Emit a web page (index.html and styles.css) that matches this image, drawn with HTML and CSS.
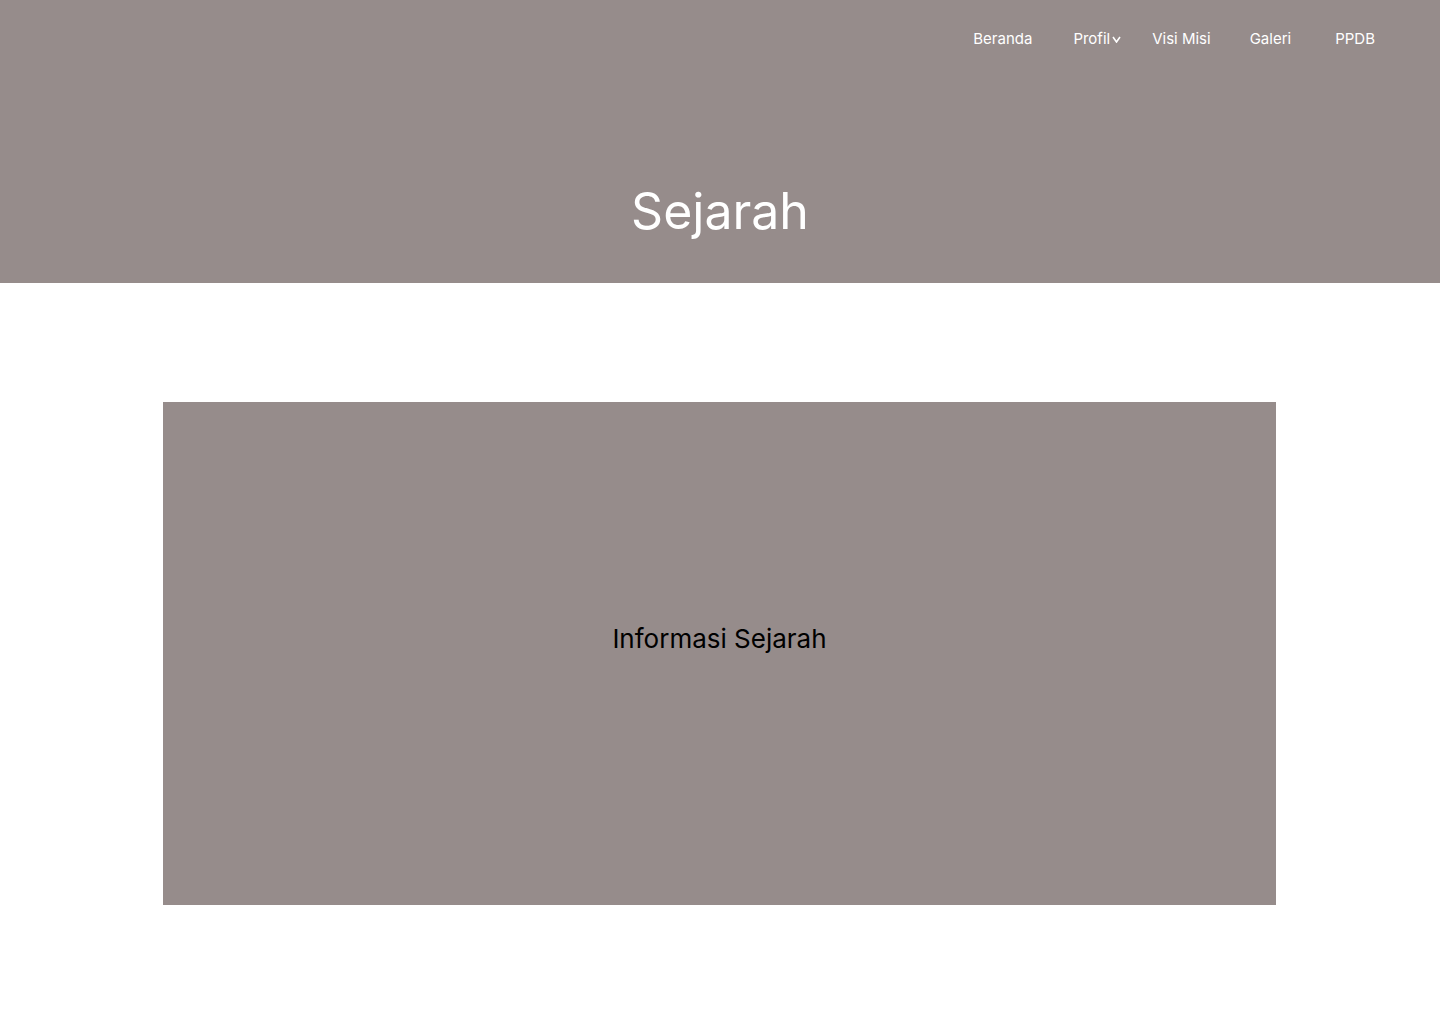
FILE: index.html
```html
<!DOCTYPE html>
<html lang="id">
<head>
<meta charset="utf-8">
<title>Sejarah</title>
<link rel="stylesheet" href="styles.css">
</head>
<body>
<header class="hero">
  <nav class="nav">
    <a class="nav-item" href="#">Beranda</a>
    <a class="nav-item nav-drop" href="#">Profil<svg class="chev" width="9" height="7" viewBox="0 0 9 7"><polyline points="1,1 4.5,6 8,1" fill="none" stroke="#fff" stroke-width="1.6"/></svg></a>
    <a class="nav-item nav-visi" href="#">Visi Misi</a>
    <a class="nav-item nav-galeri" href="#">Galeri</a>
    <a class="nav-item nav-ppdb" href="#">PPDB</a>
  </nav>
  <h1 class="hero-title">Sejarah</h1>
</header>
<main class="content">
  <section class="info-box">
    <p class="info-text">Informasi Sejarah</p>
  </section>
</main>
</body>
</html>
```

FILE: styles.css
```css
* { box-sizing: border-box; }
html, body { margin: 0; padding: 0; }
body {
  font-family: Inter, "Noto Sans", sans-serif;
  background: #ffffff;
  color: #000;
}
.hero {
  background: #968c8b;
  height: 283px;
  display: flex;
  flex-direction: column;
}
.nav {
  display: flex;
  justify-content: flex-end;
  align-items: center;
  padding: 29px 65px 0 0;
  height: 48px;
}
.nav-item {
  color: #ffffff;
  text-decoration: none;
  font-size: 15px;
  line-height: 19px;
  margin-left: 41px;
}
.nav-item:first-child { margin-left: 0; }
.nav-drop { display: inline-flex; align-items: center; margin-right: -8px; }
.chev { margin-left: 2px; margin-top: 2px; }
.nav-visi { margin-left: 39px; }
.nav-galeri { margin-left: 39px; }
.nav-ppdb { margin-left: 44px; }
.hero-title {
  margin: 133px 0 0;
  text-align: center;
  color: #ffffff;
  font-weight: 400;
  font-size: 50px;
  line-height: 60px;
}
.content {
  padding: 119px 164px 120px 163px;
}
.info-box {
  background: #968c8b;
  height: 503px;
  display: flex;
  align-items: center;
  justify-content: center;
  padding-bottom: 30px;
}
.info-text {
  margin: 0;
  font-size: 26px;
  line-height: 32px;
  color: #000;
}
```
